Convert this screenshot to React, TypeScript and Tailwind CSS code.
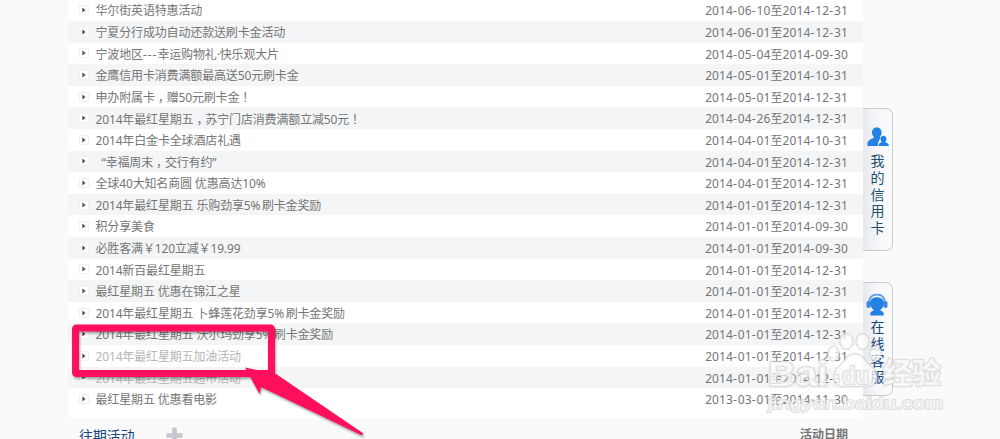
import type { ReactNode } from "react";

const activities = [
  { title: "华尔街英语特惠活动", date: "2014-06-10至2014-12-31" },
  { title: "宁夏分行成功自动还款送刷卡金活动", date: "2014-06-01至2014-12-31" },
  { title: "宁波地区---幸运购物礼·快乐观大片", date: "2014-05-04至2014-09-30" },
  { title: "金鹰信用卡消费满额最高送50元刷卡金", date: "2014-05-01至2014-10-31" },
  { title: "申办附属卡，赠50元刷卡金！", date: "2014-05-01至2014-12-31" },
  { title: "2014年最红星期五，苏宁门店消费满额立减50元！", date: "2014-04-26至2014-12-31" },
  { title: "2014年白金卡全球酒店礼遇", date: "2014-04-01至2014-10-31" },
  { title: "“幸福周末，交行有约”", date: "2014-04-01至2014-12-31", indent: true },
  { title: "全球40大知名商圆 优惠高达10%", date: "2014-04-01至2014-12-31" },
  { title: "2014年最红星期五 乐购劲享5%刷卡金奖励", date: "2014-01-01至2014-12-31" },
  { title: "积分享美食", date: "2014-01-01至2014-09-30" },
  { title: "必胜客满￥120立减￥19.99", date: "2014-01-01至2014-09-30" },
  { title: "2014新百最红星期五", date: "2014-01-01至2014-12-31" },
  { title: "最红星期五 优惠在锦江之星", date: "2014-01-01至2014-12-31" },
  { title: "2014年最红星期五 卜蜂莲花劲享5%刷卡金奖励", date: "2014-01-01至2014-12-31" },
  { title: "2014年最红星期五 沃尔玛劲享5%刷卡金奖励", date: "2014-01-01至2014-12-31" },
  { title: "2014年最红星期五加油活动", date: "2014-01-01至2014-12-31", visited: true },
  { title: "2014年最红星期五超市活动", date: "2014-01-01至2014-12-31", visited: true },
  { title: "最红星期五 优惠看电影", date: "2013-03-01至2014-11-30" },
];

// Hyphens and percent signs are set a bit looser, full-width marks sit nearer the middle
const symbolClass: Record<string, string> = {
  "-": "tracking-[0.95px]",
  "%": "tracking-[1.4px]",
  "，": "relative left-[3px]",
  "！": "font-['Noto_Sans_CJK_TC']",
};

const Label = ({ text }: { text: string }) => (
  <>
    {text.split(/([-%，！])/).map((part, i) =>
      symbolClass[part] ? (
        <span key={i} className={symbolClass[part]}>
          {part}
        </span>
      ) : (
        part
      )
    )}
  </>
);

const Bullet = () => (
  <span className="flex h-[10px] w-[10px] shrink-0 items-center justify-center rounded-[1px] border border-[#f0f0f0] bg-white">
    <svg width="4" height="6" viewBox="0 0 4 6">
      <path d="M0.3 0.4 3.6 3 0.3 5.6z" fill="#505050" />
    </svg>
  </span>
);

const SideTab = ({ icon, label, className }: { icon: ReactNode; label: string; className: string }) => (
  <a
    className={`flex w-[30px] flex-col items-center rounded-r-[7px] border border-l-0 border-[#cbccd0] bg-linear-to-r from-[#e6e8ed] via-[#f6f7f9] to-[#fbfbfc] text-[14px] ${className}`}
  >
    {icon}
    {label.split("").map((char) => (
      <span key={char} className="block h-[16.8px] leading-[16.8px]">
        {char}
      </span>
    ))}
  </a>
);

const UsersIcon = () => (
  <svg width="22" height="20" viewBox="0 0 22 20" className="mb-[6px] shrink-0" fill="#2380e4">
    <path d="M9.8 0.4c3 0 4.8 2.1 4.8 5 0 1.6-.6 3.2-1.7 4.3-.2.6.1 1 .8 1.3-1.7 1.9-2.7 4.6-3 8H.5c-.4-3 .2-4.9 2-5.9l3.7-2c.8-.4.8-.9.4-1.5C5.5 8.4 5 7 5 5.4c0-2.9 1.8-5 4.8-5z" />
    <path d="M16.4 8.8c1.9 0 3 1.3 3 3.1 0 1-.4 1.9-1 2.6-.2.5.1.8.6 1 2.1.8 2.9 1.7 2.8 3.5H11.5c0-1.8.8-2.8 2.5-3.5.6-.2.8-.5.5-1a3.7 3.7 0 0 1-1-2.6c0-1.8 1.1-3.1 2.9-3.1z" />
  </svg>
);

const SupportIcon = () => (
  <svg width="22" height="23" viewBox="0 0 22 23" className="mb-[3.5px] shrink-0 -translate-x-px">
    <path d="M3 10C3.2 4.5 6.2 1.7 11 1.7s7.8 2.8 8 8.3" fill="none" stroke="#5a9fe8" strokeWidth="1.8" />
    <rect x="0.5" y="8" width="4" height="7" rx="1.8" fill="#3d8ce4" />
    <rect x="17.5" y="8" width="4" height="7" rx="1.8" fill="#3d8ce4" />
    <path
      d="M11 4.3c4.3 0 7 2.3 7 6 0 2.9-1.5 5.2-3.6 6.4.1.9.7 1.2 1.9 1.7 1.3.6 1.5 1.9 1.4 4.1H4.3c-.1-2.2.1-3.5 1.4-4.1 1.2-.5 1.8-.8 1.9-1.7C5.5 15.5 4 13.2 4 10.3c0-3.7 2.7-6 7-6z"
      fill="#2380e4"
    />
  </svg>
);

const Highlight = () => (
  <svg
    className="absolute top-[320px] left-[68px] drop-shadow-[1px_2px_1px_rgba(0,0,0,0.35)]"
    width="300"
    height="119"
    viewBox="68 320 300 119"
  >
    <rect x="75.5" y="328" width="196" height="45.5" rx="1" fill="none" stroke="#ff0f5c" strokeWidth="7" strokeLinejoin="round" />
    <path d="M245 367.5 276 374 363.5 433.5 361.5 435.2 261 387 259.5 394z" fill="#ff0f5c" />
  </svg>
);

const Watermark = () => (
  <svg className="absolute top-[325px] left-[760px]" width="190" height="100" viewBox="760 325 190 100">
    <g
      fill="#ffffff"
      fillOpacity="0.7"
      stroke="#cfcfcf"
      strokeOpacity="0.65"
      strokeWidth="2.5"
      paintOrder="stroke"
      strokeLinejoin="round"
    >
      <ellipse cx="833.5" cy="353.5" rx="5" ry="7" />
      <ellipse cx="846.5" cy="341.5" rx="6" ry="7.5" />
      <ellipse cx="862.5" cy="341.5" rx="6" ry="7.5" />
      <ellipse cx="875.5" cy="353.5" rx="5" ry="7" />
      <path d="M855 354c-7 0-9 6-14 11-5 4-8 8-6 15 2 6 7 7 13 6h15c7 1 12-1 13-7 1-7-3-10-7-14-5-5-7-11-14-11z" />
      <text x="768" y="386" fontSize="35" fontWeight="700" textLength="60" lengthAdjust="spacingAndGlyphs" className="font-['Liberation_Sans']">
        Bai
      </text>
      <text x="842" y="384" fontSize="24" fontWeight="700" textLength="27" lengthAdjust="spacingAndGlyphs" className="font-['Liberation_Sans']">
        du
      </text>
      <text x="883" y="384" fontSize="29" fontWeight="700" textLength="58" className="font-['Noto_Sans_CJK_SC']">
        经验
      </text>
      <text x="768" y="408.5" fontSize="17" strokeWidth="2" textLength="175" lengthAdjust="spacingAndGlyphs" className="font-['Liberation_Sans']">
        jingyan.baidu.com
      </text>
    </g>
  </svg>
);

export default function App() {
  return (
    <div className="relative h-[439px] w-[1000px] overflow-hidden bg-[#fafafa] font-['Noto_Sans','Noto_Sans_CJK_SC',sans-serif] text-[12px] text-[#757575]">
      <div className="flex pl-[68px]">
        <main className="w-[795px] shrink-0">
          <ul className="h-[419px] bg-white">
            {activities.map((item, i) => (
              <li
                key={i}
                className={`flex h-[21.6px] items-center pr-[15px] pl-[11px] leading-[21.6px] ${i === 0 ? "-mt-[0.6px]" : ""} ${
                  i % 2 ? "bg-[#f3f5f7]" : "bg-white"
                }`}
              >
                <Bullet />
                <span
                  className={`ml-[6.5px] translate-y-[1.4px] tracking-[-0.15px] whitespace-pre ${item.indent ? "pl-[6px]" : ""} ${
                    item.visited ? "text-[#b5b5b5]" : ""
                  }`}
                >
                  <Label text={item.title} />
                </span>
                <span className="ml-auto translate-y-[1.4px] tracking-[0.1px]">
                  <Label text={item.date} />
                </span>
              </li>
            ))}
          </ul>
          <div className="flex h-[34px] items-center pr-[15px] pl-[11px]">
            <h2 className="text-[14px] tracking-[-0.2px] text-[#17467f]">往期活动</h2>
            <svg width="17" height="17" viewBox="0 0 17 17" className="ml-[31.5px]">
              <path d="M8.5 0.5v16M0.5 8.5h16" stroke="#c3c8ce" strokeWidth="4.5" />
            </svg>
            <span className="ml-auto font-bold">活动日期</span>
          </div>
        </main>

        <aside className="flex flex-col gap-[31px] pt-[108px]">
          <SideTab icon={<UsersIcon />} label="我的信用卡" className="h-[143px] pt-[18px] text-[#1d506f]" />
          <SideTab icon={<SupportIcon />} label="在线客服" className="h-[114px] pt-[9.5px] text-[#17467f]" />
        </aside>
      </div>

      <Highlight />
      <Watermark />
    </div>
  );
}
